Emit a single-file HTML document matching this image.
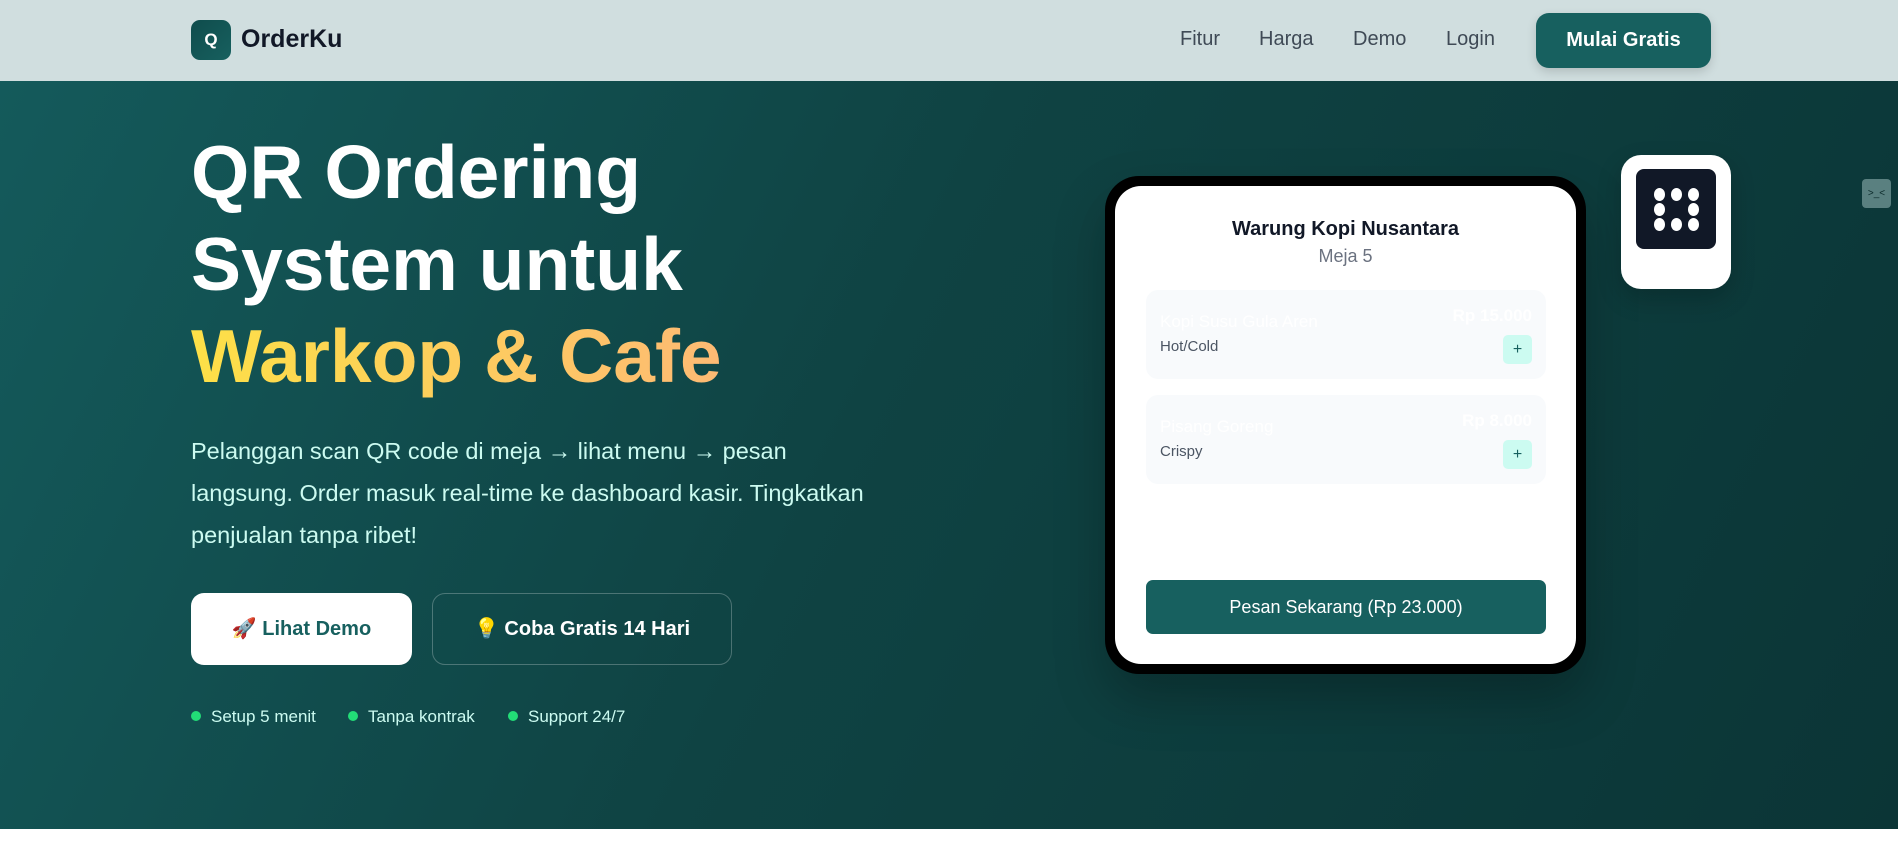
<!DOCTYPE html>
<html><head><meta charset="utf-8"><style>
*{margin:0;padding:0;box-sizing:border-box}
body{width:1898px;height:867px;overflow:hidden;background:#fff;font-family:"Liberation Sans",sans-serif;position:relative}
nav{position:absolute;left:0;top:0;width:1898px;height:81px;background:#d0dedf;}
.logo{position:absolute;left:191px;top:20px;width:40px;height:40px;border-radius:9px;background:linear-gradient(135deg,#0f4c4c,#17605f);color:#fff;font-weight:bold;font-size:17px;text-align:center;line-height:40px}
.brand{position:absolute;left:241px;top:25px;font-size:25px;font-weight:bold;color:#111827}
.nl{position:absolute;top:28px;font-size:20px;color:#3f4a56}
.cta{position:absolute;left:1536px;top:13px;width:175px;height:55px;border-radius:13px;background:#17605f;color:#fff;font-weight:bold;font-size:20px;text-align:center;line-height:55px;box-shadow:0 4px 10px rgba(0,0,0,.15)}
.hero{position:absolute;left:0;top:81px;width:1898px;height:748px;background:linear-gradient(115deg,#145a5b 0%,#0f4343 45%,#0b3536 100%)}
h1{position:absolute;left:191px;font-size:75px;line-height:92px;color:#fff;font-weight:bold}
.grad{background:linear-gradient(90deg,#fde047,#fdba74);-webkit-background-clip:text;background-clip:text;color:transparent}
p.lead{position:absolute;left:191px;width:960px;font-size:23.5px;line-height:42px;color:#ccfbf1}
.b1{position:absolute;left:191px;width:221px;height:72px;border-radius:13px;background:#fff;color:#17605f;font-weight:bold;font-size:20px;text-align:center;line-height:72px}
.b2{position:absolute;left:432px;width:300px;height:72px;border-radius:13px;border:1px solid rgba(255,255,255,.25);color:#fff;font-weight:bold;font-size:20px;text-align:center;line-height:70px}
.feat{position:absolute;font-size:17px;color:#ccfbf1}
.feat i{display:inline-block;width:10px;height:10px;border-radius:50%;background:#22dd77;margin-right:10px;vertical-align:1px}
.phone{position:absolute;left:1105px;top:176px;width:481px;height:498px;background:#000;border-radius:34px;padding:10px;box-shadow:0 25px 50px rgba(0,0,0,.25)}
.scr{width:100%;height:100%;background:#fff;border-radius:26px;position:relative}
.t{position:absolute;left:0;width:100%;text-align:center}
.item{position:absolute;left:31px;width:400px;height:89px;background:#f8fafc;border-radius:12px}
.item .n{position:absolute;left:14px;top:22px;color:#fff;font-size:17px}
.item .pr{position:absolute;right:14px;top:16px;color:#fff;font-size:17px;font-weight:bold}
.item .d{position:absolute;left:14px;top:48px;color:#4b5563;font-size:15px}
.item .pl{position:absolute;right:14px;top:45px;width:29px;height:29px;border-radius:5px;background:#ccfbf1;color:#17605f;text-align:center;line-height:29px;font-size:16px}
.order{position:absolute;left:31px;top:394px;width:400px;height:54px;border-radius:7px;background:#17605f;color:#fff;font-size:18px;text-align:center;line-height:54px}
.qr{position:absolute;left:1621px;top:155px;width:110px;height:134px;background:#fff;border-radius:20px;box-shadow:0 10px 25px rgba(0,0,0,.2)}
.qri{position:absolute;left:15px;top:14px;width:80px;height:80px;background:#111827;border-radius:8px}
.dot{position:absolute;width:11px;height:13px;border-radius:50%;background:#fff}
.fl{position:absolute;left:1862px;top:179px;width:29px;height:29px;border-radius:4px;background:#5a8080;color:#0b2a2a;font-size:10px;text-align:center;line-height:29px}
</style></head><body>
<nav>
<div class="logo">Q</div><div class="brand">OrderKu</div>
<div class="nl" style="left:1180px">Fitur</div>
<div class="nl" style="left:1259px">Harga</div>
<div class="nl" style="left:1353px">Demo</div>
<div class="nl" style="left:1446px">Login</div>
<div class="cta">Mulai Gratis</div>
</nav>
<div class="hero">
<h1 style="top:45px">QR Ordering<br>System untuk<br><span class="grad">Warkop &amp; Cafe</span></h1>
<p class="lead" style="top:349px">Pelanggan scan QR code di meja →&nbsp;lihat menu →&nbsp;pesan<br>langsung. Order masuk real-time ke dashboard kasir. Tingkatkan<br>penjualan tanpa ribet!</p>
<div class="b1" style="top:512px">🚀 Lihat Demo</div>
<div class="b2" style="top:512px">💡 Coba Gratis 14 Hari</div>
<div class="feat" style="left:191px;top:626px"><i></i>Setup 5 menit</div>
<div class="feat" style="left:348px;top:626px"><i></i>Tanpa kontrak</div>
<div class="feat" style="left:508px;top:626px"><i></i>Support 24/7</div>
</div>
<div class="phone"><div class="scr">
<div class="t" style="top:32px;font-size:20px;font-weight:bold;color:#111827">Warung Kopi Nusantara</div>
<div class="t" style="top:60px;font-size:18px;color:#6b7280">Meja 5</div>
<div class="item" style="top:104px"><div class="n">Kopi Susu Gula Aren</div><div class="pr">Rp 15.000</div><div class="d">Hot/Cold</div><div class="pl">+</div></div>
<div class="item" style="top:209px"><div class="n">Pisang Goreng</div><div class="pr">Rp 8.000</div><div class="d">Crispy</div><div class="pl">+</div></div>
<div class="order">Pesan Sekarang (Rp 23.000)</div>
</div></div>
<div class="qr"><div class="qri">
<div class="dot" style="left:18px;top:19px"></div><div class="dot" style="left:35px;top:19px"></div><div class="dot" style="left:52px;top:19px"></div>
<div class="dot" style="left:18px;top:34px"></div><div class="dot" style="left:52px;top:34px"></div>
<div class="dot" style="left:18px;top:49px"></div><div class="dot" style="left:35px;top:49px"></div><div class="dot" style="left:52px;top:49px"></div>
</div></div>
<div class="fl">&gt;_&lt;</div>
</body></html>
